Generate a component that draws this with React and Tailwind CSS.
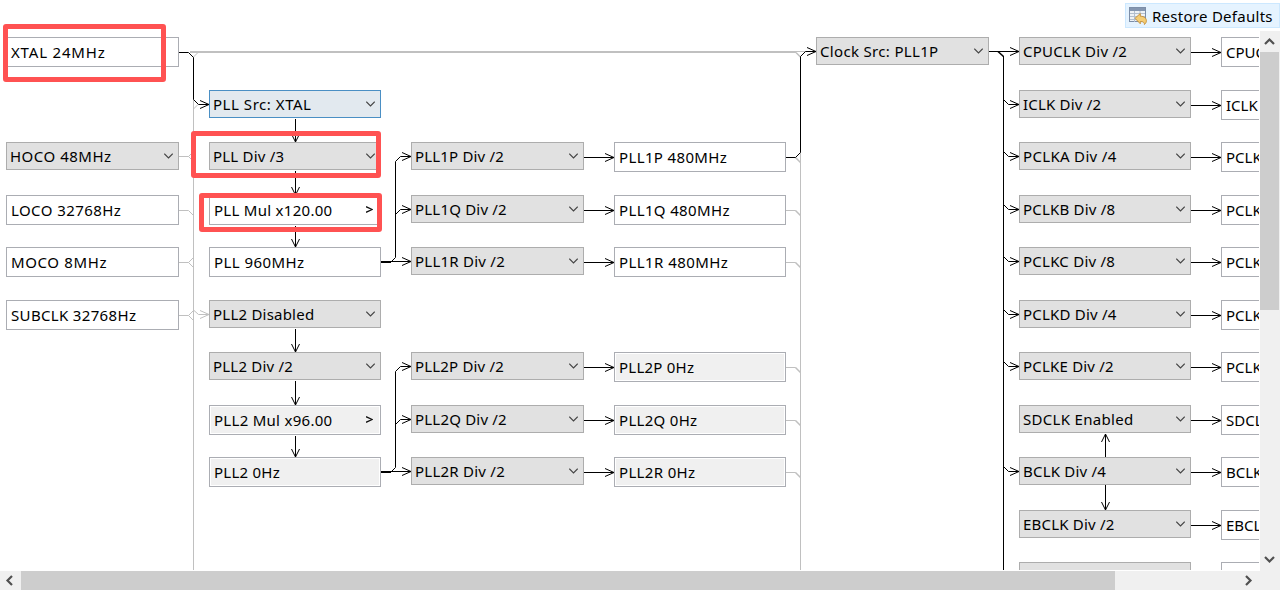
import React from "react";

const BLACK = "#000000";
const GREY = "#c0c0c0";

// x, y, w: box on the diagram; s: letter spacing of the label
const combos = [
  { x: 6, y: 142, w: 173, t: "HOCO 48MHz", s: 0.5 },
  { x: 209, y: 90, w: 172, t: "PLL Src: XTAL", s: 0.54, active: true },
  { x: 209, y: 142, w: 172, t: "PLL Div /3", s: 0.2 },
  { x: 209, y: 300, w: 172, t: "PLL2 Disabled", s: 0.22 },
  { x: 209, y: 352, w: 172, t: "PLL2 Div /2", s: 0.2 },
  { x: 411, y: 142, w: 173, t: "PLL1P Div /2", s: 0.18 },
  { x: 411, y: 195, w: 173, t: "PLL1Q Div /2", s: 0.2 },
  { x: 411, y: 247, w: 173, t: "PLL1R Div /2", s: 0.24 },
  { x: 411, y: 352, w: 173, t: "PLL2P Div /2", s: 0.18 },
  { x: 411, y: 405, w: 173, t: "PLL2Q Div /2", s: 0.2 },
  { x: 411, y: 457, w: 173, t: "PLL2R Div /2", s: 0.24 },
  { x: 816, y: 37, w: 173, t: "Clock Src: PLL1P", s: 0.33 },
  { x: 1019, y: 37, w: 172, t: "CPUCLK Div /2", s: 0.28 },
  { x: 1019, y: 90, w: 172, t: "ICLK Div /2", s: 0.2 },
  { x: 1019, y: 142, w: 172, t: "PCLKA Div /4", s: 0.32 },
  { x: 1019, y: 195, w: 172, t: "PCLKB Div /8", s: 0.2 },
  { x: 1019, y: 247, w: 172, t: "PCLKC Div /8", s: 0.24 },
  { x: 1019, y: 300, w: 172, t: "PCLKD Div /4", s: 0.2 },
  { x: 1019, y: 352, w: 172, t: "PCLKE Div /2", s: 0.2 },
  { x: 1019, y: 405, w: 172, t: "SDCLK Enabled", s: 0.3 },
  { x: 1019, y: 457, w: 172, t: "BCLK Div /4", s: 0.2 },
  { x: 1019, y: 510, w: 172, t: "EBCLK Div /2", s: 0.2 },
  { x: 1019, y: 562, w: 172, t: "" },
];

const fields = [
  { x: 6, y: 37, w: 173, t: "XTAL 24MHz", s: 0.82 },
  { x: 6, y: 195, w: 173, t: "LOCO 32768Hz", s: 0.42 },
  { x: 6, y: 247, w: 173, t: "MOCO 8MHz", s: 0.62 },
  { x: 6, y: 300, w: 173, t: "SUBCLK 32768Hz", s: 0.34 },
  { x: 209, y: 195, w: 172, t: "PLL Mul x120.00", s: 0.28, more: true },
  { x: 209, y: 247, w: 172, t: "PLL 960MHz", s: 0.42 },
  { x: 209, y: 405, w: 172, t: "PLL2 Mul x96.00", s: 0.28, more: true, off: true },
  { x: 209, y: 457, w: 172, t: "PLL2 0Hz", s: 0.25, off: true },
  { x: 614, y: 142, w: 172, t: "PLL1P 480MHz", s: 0.36 },
  { x: 614, y: 195, w: 172, t: "PLL1Q 480MHz", s: 0.36 },
  { x: 614, y: 247, w: 172, t: "PLL1R 480MHz", s: 0.42 },
  { x: 614, y: 352, w: 172, t: "PLL2P 0Hz", s: 0.24, off: true },
  { x: 614, y: 405, w: 172, t: "PLL2Q 0Hz", s: 0.3, off: true },
  { x: 614, y: 457, w: 172, t: "PLL2R 0Hz", s: 0.34, off: true },
  { x: 1221, y: 37, w: 172, t: "CPUCLK" },
  { x: 1221, y: 90, w: 172, t: "ICLK" },
  { x: 1221, y: 142, w: 172, t: "PCLKA" },
  { x: 1221, y: 195, w: 172, t: "PCLKB" },
  { x: 1221, y: 247, w: 172, t: "PCLKC" },
  { x: 1221, y: 300, w: 172, t: "PCLKD" },
  { x: 1221, y: 352, w: 172, t: "PCLKE" },
  { x: 1221, y: 405, w: 172, t: "SDCLK" },
  { x: 1221, y: 457, w: 172, t: "BCLK" },
  { x: 1221, y: 510, w: 172, t: "EBCLK" },
  { x: 1221, y: 562, w: 172, t: "" },
];

const marks = [
  { x: 3, y: 24, w: 163, h: 58 },
  { x: 191, y: 131, w: 190, h: 47 },
  { x: 199, y: 193, w: 183, h: 39 },
];

const place = (n) => ({ left: n.x, top: n.y - 31, width: n.w });

function Combo({ n }) {
  return (
    <div
      className={
        "absolute flex h-7 items-center justify-between border pl-[3px] pr-[5px] " +
        (n.active ? "border-[#4a8fc4] bg-[#e2e9ef]" : "border-[#adadad] bg-[#e1e1e1]")
      }
      style={place(n)}
    >
      <span className="leading-[26px]" style={{ letterSpacing: n.s }}>{n.t}</span>
      <svg className="h-[6px] w-[9px]" viewBox="0 0 9 6" fill="none" stroke="#444" strokeWidth="1.1">
        <path d="M.3 .7 4.500 4.900 8.700 .7" />
      </svg>
    </div>
  );
}

function Field({ n }) {
  return (
    <div
      className={
        "absolute flex h-[30px] items-center justify-between border border-[#abadb3] pl-1 pr-[7px] " +
        (n.off ? "bg-[#f0f0f0] shadow-[inset_0_0_0_1px_#fff]" : "bg-white")
      }
      style={place(n)}
    >
      <span className="leading-7" style={{ letterSpacing: n.s }}>{n.t}</span>
      {n.more && (
        <svg className="mb-0.5 h-[7px] w-[7px]" viewBox="0 0 7 7" fill="none" stroke="#111" strokeWidth="1.3">
          <path d="M0 .7 6.2 3.5 0 6.3" />
        </svg>
      )}
    </div>
  );
}

const right = (x, y) => `M${x - 9} ${y - 4}L${x} ${y}L${x - 9} ${y + 4}`;
const down = (x, y) => `M${x - 4} ${y - 8}L${x} ${y}L${x + 4} ${y - 8}`;

const outRows = [52.5, 105.5, 157.5, 210.5, 262.5, 315.5, 367.5, 420.5, 472.5, 525.5];
const srcRows = [104.5, 156.5, 209.5, 261.5, 314.5, 366.5, 471.5];

function Wires() {
  return (
    <svg className="absolute left-0 top-0 h-[539px] w-[1259px]" viewBox="0 31 1259 539" fill="none" strokeWidth="1">
      <g stroke={GREY}>
        <path d="M193.5 57V570M800.5 57V570" />
        <path strokeWidth="2" d="M190 52H796" />
        <path d="M796 51.500H806" />
        <path d="M193.5 57 198 52.5M193.5 109 198 104.5" />
        <path strokeWidth="1.500" d="M796 52.5 800.5 57" />
        {[156.5, 210.5, 262.5, 315.5].map((y) => (
          <path key={y} d={`M179 ${y}H188.5L193.5 ${y + 5}`} />
        ))}
        {[156.5, 262.5, 315.5].map((y) => (
          <path key={y} d={`M188.5 ${y}L193.5 ${y - 5}`} />
        ))}
        <path d={"M193.5 310 198.5 314.5H209" + right(209, 314.5)} />
        {[210.5, 262.5, 367.5, 420.5, 472.5].map((y) => (
          <path key={y} d={`M786 ${y}H795.5L800.5 ${y + 5}`} />
        ))}
        {[157.5, 210.5, 262.5, 367.5, 420.5, 472.5].map((y) => (
          <path key={y} strokeWidth="1.5" d={`M795.5 ${y}L800.5 ${y + 5}`} />
        ))}
      </g>
      <g stroke={BLACK}>
        <path d={"M179 52.5H188.5L193.5 57.5V99.5L198.5 104.5H209" + right(209, 104.5)} />
        {[[118, 142], [170, 195], [225, 247], [328, 352], [380, 405], [435, 457]].map(([a, b]) => (
          <path key={a} d={`M295.5 ${a + 1}V${b}` + down(295.5, b)} />
        ))}
        {[0, 210].map((o) => (
          <g key={o}>
            <path strokeWidth="2" d={`M381 ${262 + o}H391`} />
            <path d={`M391 ${261.5 + o}H411M391 ${262 + o}L395.5 ${257.5 + o}V${161.5 + o}L400.5 ${156.5 + o}H411M395.5 ${214.5 + o}L400.5 ${209.5 + o}H411`} />
            {[156.5, 209.5, 261.5].map((y) => (
              <path key={y} d={right(411, y + o)} />
            ))}
            {[157.5, 210.5, 262.5].map((y) => (
              <path key={y} d={`M584 ${y + o}H614` + right(614, y + o)} />
            ))}
          </g>
        ))}
        <path d={"M786 157.5H795.5L800.5 152.5V56.5L805.5 51.5H816" + right(816, 51.5)} />
        <path d={"M989 51.5H1019" + right(1019, 51.5)} />
        <path strokeWidth="1.6" d="M998 51.5 1003.5 56.5" />
        <path d="M1003.5 56V570" />
        {srcRows.map((y) => (
          <path key={y} d={`M1003.5 ${y - 5}L1008.5 ${y}H1019` + right(1019, y)} />
        ))}
        {outRows.map((y) => (
          <path key={y} d={`M1191 ${y}H1221` + right(1221, y)} />
        ))}
        <path d="M1105.5 457V434M1101.5 442 1105.5 434 1109.5 442" />
        <path d={"M1105.5 485V510" + down(1105.5, 510)} />
      </g>
    </svg>
  );
}

function Chevron({ d }) {
  return (
    <svg className="size-[11px]" viewBox="0 0 11 11" fill="none" stroke="#505050" strokeWidth="2.2">
      <path d={d} />
    </svg>
  );
}

function RestoreIcon() {
  return (
    <svg className="h-[18px] w-[18px]" viewBox="0 0 18 18">
      <rect x=".5" y=".5" width="16" height="14" fill="#eef2f6" stroke="#7c8ea8" />
      <path d="M1 1h15v3H1z" fill="#8496b0" />
      <path d="M1 6.5h15M1 9.5h15M1 12.500h15M5.500 4v11M11 4v11" stroke="#b3bfce" />
      <path d="M6 11.300 11.300 6.500v2.700c4 0 6.100 2.200 6.100 4.600 0 1.500-.7 2.700-2 3.700.1-2-.9-3-4.100-3V16.800Z" fill="#f5cd74" stroke="#c58f35" strokeWidth=".9" />
    </svg>
  );
}

export default function App() {
  return (
    <div className="flex h-[590px] w-[1280px] flex-col overflow-hidden bg-white font-['Noto_Sans',sans-serif] text-[15px] text-black">
      <header className="flex h-[31px] shrink-0 justify-end pt-[3px]">
        <button className="flex h-[25px] w-[155px] items-center gap-[5px] whitespace-nowrap border border-[#cce8ff] bg-[#e5f3ff] pl-[3px]">
          <RestoreIcon />
          <span className="pt-px tracking-[0.27px]">Restore Defaults</span>
        </button>
      </header>
      <div className="relative flex h-[540px] shrink-0">
        <main className="relative mb-px w-[1259px] shrink-0 overflow-hidden whitespace-nowrap">
          {fields.map((n) => (
            <Field key={n.x + "-" + n.y} n={n} />
          ))}
          {combos.map((n) => (
            <Combo key={n.x + "-" + n.y} n={n} />
          ))}
          <Wires />
        </main>
        {marks.map((m) => (
          <div
            key={m.y}
            className="absolute rounded-[3px] border-[5px] border-[#ff5252]"
            style={{ ...place(m), height: m.h }}
          />
        ))}
        <aside className="ml-px flex w-5 flex-col items-center bg-[#f0f0f0]">
          <div className="flex h-[21px] w-full items-center pl-1">
            <Chevron d="M1 8 5.500 3.500 10 8" />
          </div>
          <div className="mr-px h-[258px] w-[19px] bg-[#cdcdcd]" />
          <div className="mt-auto flex h-[24px] w-full items-center pl-1">
            <Chevron d="M1 3 5.500 7.500 10 3" />
          </div>
        </aside>
      </div>
      <footer className="flex h-[19px] shrink-0 bg-[#f0f0f0]">
        <div className="flex w-[21px] items-center pl-1">
          <Chevron d="M8 1 3.500 5.500 8 10" />
        </div>
        <div className="w-[1094px] bg-[#cdcdcd]" />
        <div className="ml-auto flex w-[37px] items-center">
          <Chevron d="M3 1 7.500 5.500 3 10" />
        </div>
      </footer>
    </div>
  );
}
